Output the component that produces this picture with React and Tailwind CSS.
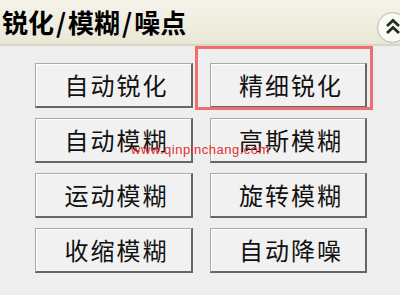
import React from "react";

const buttons = [
  "自动锐化",
  "精细锐化",
  "自动模糊",
  "高斯模糊",
  "运动模糊",
  "旋转模糊",
  "收缩模糊",
  "自动降噪",
];

const CollapseIcon = () => (
  <div className="shrink-0 mt-[10px] mr-[-8px] w-[31px] h-[31px] rounded-full border border-[#b9b6a2] bg-[#fafaf4] flex items-center">
    <svg width="18" height="18" viewBox="0 0 18 18" className="ml-[7px]">
      <path d="M2 8 L8 2.5 L14 8" fill="none" stroke="#22301c" strokeWidth="2.8" />
      <path d="M2 15 L8 9.5 L14 15" fill="none" stroke="#22301c" strokeWidth="2.8" />
    </svg>
  </div>
);

const App = () => {
  return (
    <div
      className="relative w-[400px] h-[295px] overflow-hidden bg-[#eeeeee]"
      style={{ fontFamily: '"Noto Sans CJK SC", "Noto Sans", sans-serif' }}
    >
      {/* HEADER */}
      <div className="h-[46px] bg-gradient-to-b from-[#f6f4ea] to-[#e9e7d6] border-b-2 border-[#d9d6c4] flex items-center justify-between pl-[2px]">
        <h1 className="text-[26px] font-bold text-black leading-none">
          锐化<span className="px-[2px]">/</span>模糊<span className="px-[2px]">/</span>噪点
        </h1>
        <CollapseIcon />
      </div>

      {/* BUTTONS */}
      <div className="grid grid-cols-[158px_157px] gap-x-[17px] gap-y-[10px] pl-[35px] pt-[17px]">
        {buttons.map((label) => (
          <button
            key={label}
            className="h-[45px] bg-[#f1f1f1] border-t border-l border-[#a9a9a9] border-r-2 border-b-2 border-r-[#666666] border-b-[#666666] shadow-[inset_1px_1px_0_#ffffff] flex items-center justify-center pl-[6px] text-[24px] tracking-[2px] text-[#111111] leading-none"
          >
            {label}
          </button>
        ))}
      </div>

      {/* HIGHLIGHT */}
      <div className="absolute left-[195px] top-[46px] w-[178px] h-[64px] border-[3px] border-[#f26d6d] pointer-events-none" />

      {/* WATERMARK */}
      <div
        className="absolute left-[131px] top-[140px] text-[13px] text-[#e2322c] tracking-[0.5px] pointer-events-none"
        style={{ fontFamily: '"Liberation Sans", sans-serif' }}
      >
        www.qinpinchang.com
      </div>
    </div>
  );
};

export default App;
